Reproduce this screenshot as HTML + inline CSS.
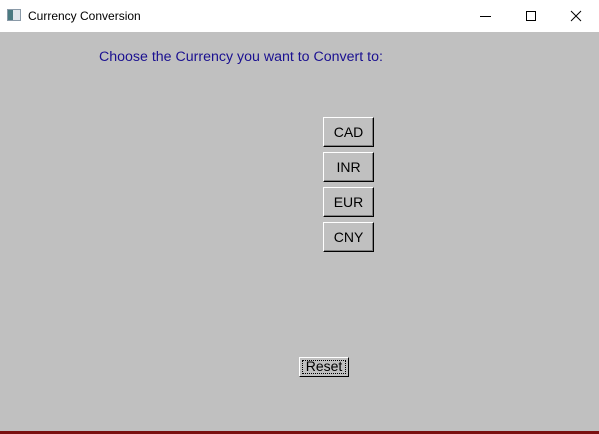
<!DOCTYPE html>
<html><head><meta charset="utf-8"><style>
*{margin:0;padding:0;box-sizing:border-box}
body{width:599px;height:434px;overflow:hidden;background:#c0c0c0;font-family:"Liberation Sans",Arial,sans-serif;position:relative}
.tb{position:absolute;left:0;top:0;width:599px;height:32px;background:#fff}
.tb .t{position:absolute;left:28px;top:9px;font-size:12px;color:#000;font-family:"Liberation Sans",sans-serif}
.ico{position:absolute;left:7px;top:9px;width:14px;height:12px;border:1px solid #8a9aa8;background:linear-gradient(90deg,#4a7a80 0 40%,#dfe6ea 40% 100%)}
.lbl{position:absolute;left:99px;top:49px;font-size:14.2px;color:#1a1090;white-space:nowrap}
.b{position:absolute;left:323px;width:51px;height:30px;background:#c0c0c0;border:1px solid;border-color:#fff #000 #000 #fff;box-shadow:inset -1px -1px 0 #808080;font-size:14px;color:#000;text-align:center;line-height:29px}
.r{position:absolute;left:299px;top:357px;width:50px;height:20px;background:#c0c0c0;border:1px solid;border-color:#fff #000 #000 #fff;font-size:14px;text-align:center;line-height:17px;color:#000}
.r span{position:absolute;left:2px;top:2px;right:2px;bottom:2px;border:1px dotted #000}
.bot{position:absolute;left:0;top:431px;width:599px;height:3px;background:#7a1010}
</style></head><body>
<div class="tb"><div class="ico"></div><div class="t">Currency Conversion</div>
<svg style="position:absolute;left:460px;top:0" width="139" height="32">
<line x1="20" y1="16.5" x2="31" y2="16.5" stroke="#000" stroke-width="1"/>
<rect x="66.5" y="11.5" width="9" height="9" fill="none" stroke="#000"/>
<line x1="111" y1="11" x2="121" y2="21" stroke="#000"/><line x1="121" y1="11" x2="111" y2="21" stroke="#000"/>
</svg></div>
<div class="lbl">Choose the Currency you want to Convert to:</div>
<div class="b" style="top:117px">CAD</div>
<div class="b" style="top:152px">INR</div>
<div class="b" style="top:187px">EUR</div>
<div class="b" style="top:222px">CNY</div>
<div class="r"><span></span>Reset</div>
<div class="bot"></div>
</body></html>
